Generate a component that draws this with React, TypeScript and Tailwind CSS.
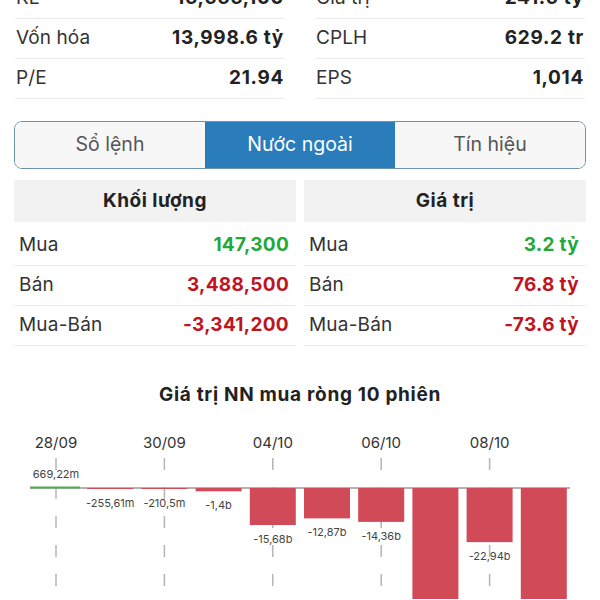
import React from "react";

const font = { fontFamily: "Inter, 'Noto Sans', 'Liberation Sans', sans-serif" };

function KV({ label, value }: { label: string; value: string }) {
  return (
    <div className="h-[40px] flex items-center justify-between border-b border-[#ececec] px-[1px]">
      <span className="text-[19px] text-[#333] tracking-[0.1px]">{label}</span>
      <span className="text-[19px] font-bold text-[#222] tracking-[0.7px]">{value}</span>
    </div>
  );
}

function DataRow({ label, value, color }: { label: string; value: string; color: string }) {
  return (
    <div className="h-[40px] flex items-center justify-between border-b border-[#ececec] pl-[5px] pr-[7px]">
      <span className="text-[19px] text-[#333] tracking-[0.2px]">{label}</span>
      <span className={`text-[19px] font-bold tracking-[0.3px] ${color}`}>{value}</span>
    </div>
  );
}

const bars = [
  { v: 0.66922, label: "669,22m" },
  { v: -0.25561, label: "-255,61m" },
  { v: -0.2105, label: "-210,5m" },
  { v: -1.4, label: "-1,4b" },
  { v: -15.68, label: "-15,68b" },
  { v: -12.87, label: "-12,87b" },
  { v: -14.36, label: "-14,36b" },
  { v: -60, label: "" },
  { v: -22.94, label: "-22,94b" },
  { v: -60, label: "" },
];

function Chart() {
  const zero = 489;
  const scale = 2.36;
  const step = 54.2;
  const x0 = 56;
  const dates = [
    { i: 0, t: "28/09" },
    { i: 2, t: "30/09" },
    { i: 4, t: "04/10" },
    { i: 6, t: "06/10" },
    { i: 8, t: "08/10" },
  ];
  return (
    <svg width="600" height="180" viewBox="0 420 600 180" className="block">
      {dates.map((d) => {
        const x = x0 + d.i * step;
        return (
          <g key={d.t}>
            <text x={x} y={449} textAnchor="middle" fontSize="15" fill="#333" style={font}>
              {d.t}
            </text>
            <line x1={x} y1={459} x2={x} y2={600} stroke="#b5b5b5" strokeWidth="1.5" strokeDasharray="12 17" />
          </g>
        );
      })}
      <line x1={30} y1={zero} x2={570} y2={zero} stroke="#9a9a9a" strokeWidth="1.5" />
      {bars.map((b, i) => {
        const cx = x0 + i * step;
        if (b.v > 0) {
          return (
            <g key={i}>
              <rect x={30} y={zero - 1.5} width={50} height={2} fill="#4caf50" />
              <text x={cx} y={479} textAnchor="middle" fontSize="11" fill="#444" style={font}>
                {b.label}
              </text>
            </g>
          );
        }
        const h = Math.max(1, -b.v * scale);
        return (
          <g key={i}>
            <rect x={cx - 23} y={zero} width={46} height={h} fill="#d04a57" />
            {b.label && (
              <text x={cx} y={zero + h + 18} textAnchor="middle" fontSize="11" fill="#444" style={font}>
                {b.label}
              </text>
            )}
          </g>
        );
      })}
    </svg>
  );
}

export default function App() {
  return (
    <div className="w-[600px] h-[600px] overflow-hidden bg-white" style={font}>
      <div className="mt-[-21px] grid grid-cols-2 gap-[30px] px-[15px]">
        <div>
          <KV label="KL" value="16,566,100" />
          <KV label="Vốn hóa" value="13,998.6 tỷ" />
          <KV label="P/E" value="21.94" />
        </div>
        <div>
          <KV label="Giá trị" value="241.5 tỷ" />
          <KV label="CPLH" value="629.2 tr" />
          <KV label="EPS" value="1,014" />
        </div>
      </div>

      <div className="mx-[14px] mt-[22px] h-[48px] grid grid-cols-3 rounded-[8px] border-[1.5px] border-[#6f93ac] overflow-hidden">
        <div className="flex items-center justify-center bg-[#f7f7f7] text-[19.5px] text-[#555]">Sổ lệnh</div>
        <div className="flex items-center justify-center bg-[#2b7cba] text-[19.5px] text-white">Nước ngoài</div>
        <div className="flex items-center justify-center bg-[#f7f7f7] text-[19.5px] text-[#555]">Tín hiệu</div>
      </div>

      <div className="mt-[11px] px-[14px] grid grid-cols-2 gap-[8px]">
        <div>
          <div className="h-[42px] flex items-center justify-center bg-[#f2f2f2] text-[19px] font-bold text-[#222] tracking-[0.5px]">
            Khối lượng
          </div>
          <div className="mt-[4px]">
            <DataRow label="Mua" value="147,300" color="text-[#22a93a]" />
            <DataRow label="Bán" value="3,488,500" color="text-[#c0141f]" />
            <DataRow label="Mua-Bán" value="-3,341,200" color="text-[#c0141f]" />
          </div>
        </div>
        <div>
          <div className="h-[42px] flex items-center justify-center bg-[#f2f2f2] text-[19px] font-bold text-[#222] tracking-[0.5px]">
            Giá trị
          </div>
          <div className="mt-[4px]">
            <DataRow label="Mua" value="3.2 tỷ" color="text-[#22a93a]" />
            <DataRow label="Bán" value="76.8 tỷ" color="text-[#c0141f]" />
            <DataRow label="Mua-Bán" value="-73.6 tỷ" color="text-[#c0141f]" />
          </div>
        </div>
      </div>

      <div className="mt-[37px] h-[24px] flex items-center justify-center text-[19px] font-bold text-[#222] tracking-[0.7px]">
        Giá trị NN mua ròng 10 phiên
      </div>
      <div className="mt-[12px]">
        <Chart />
      </div>
    </div>
  );
}
